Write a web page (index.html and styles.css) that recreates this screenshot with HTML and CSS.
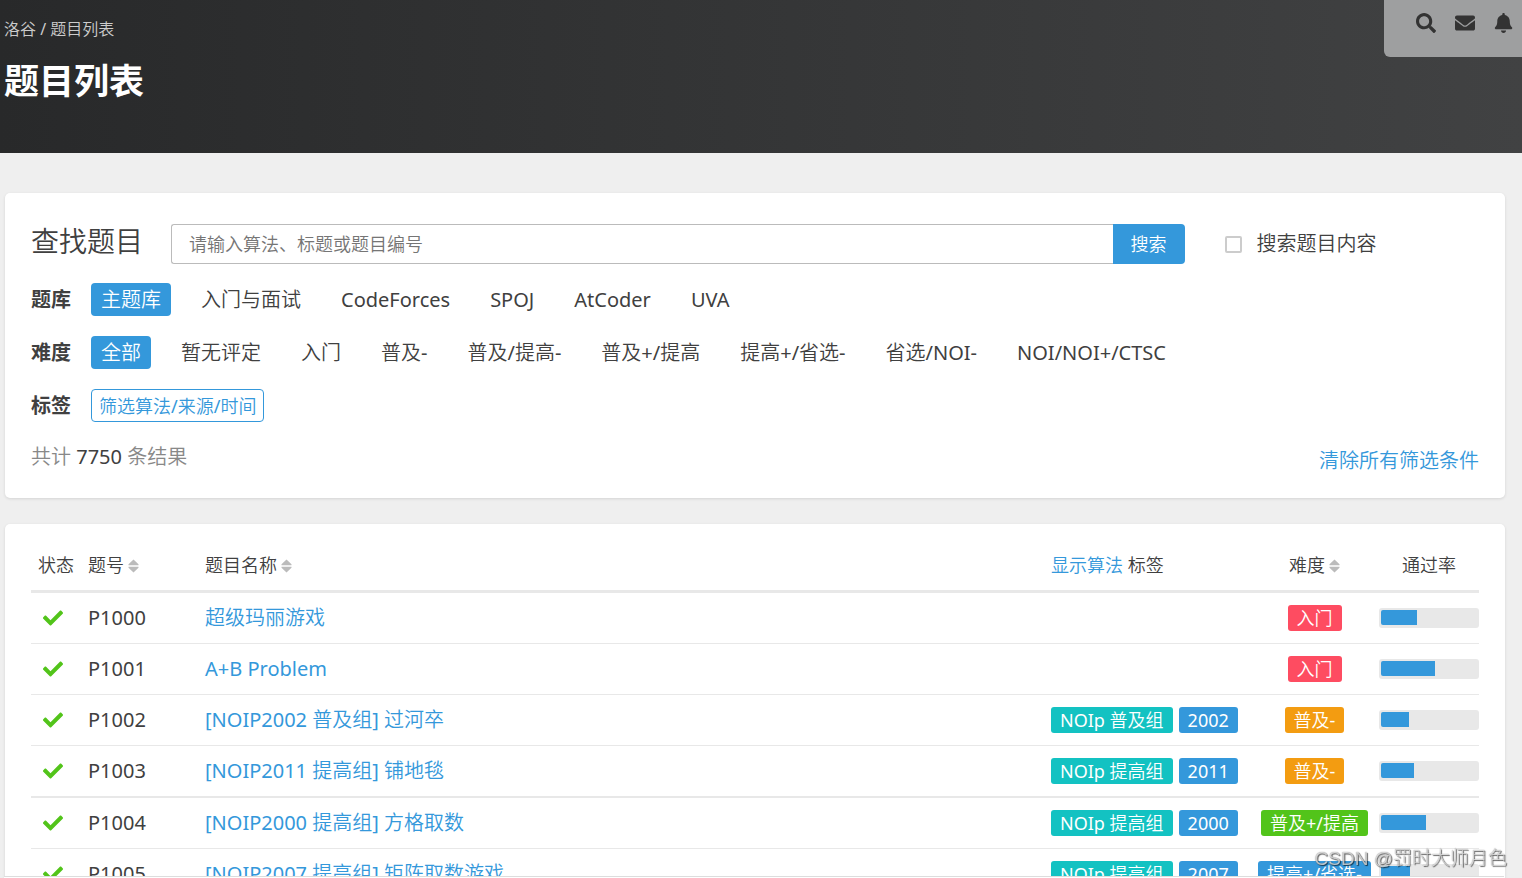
FILE: index.html
```html
<!DOCTYPE html>
<html lang="zh-CN">
<head>
<meta charset="utf-8">
<title>题目列表 - 洛谷</title>
<link rel="stylesheet" href="styles.css">
</head>
<body>
<svg class="defs" aria-hidden="true">
  <symbol id="check" viewBox="0 0 512 512"><path d="M173.898 439.404l-166.400-166.400c-9.997-9.997-9.997-26.206 0-36.204l36.203-36.204c9.997-9.998 26.207-9.998 36.204 0L192 312.690 432.095 72.596c9.997-9.997 26.207-9.997 36.204 0l36.203 36.204c9.997 9.997 9.997 26.206 0 36.204l-294.400 294.401c-9.998 9.997-26.207 9.997-36.204-.001z"/></symbol>
  <symbol id="sort" viewBox="0 0 11 14"><path d="M5.500 0.500L10.500 5.200V6.200H0.500V5.200zM0.500 7.800H10.500V8.800L5.500 13.500L0.500 8.800z"/></symbol>
</svg>
<header class="banner">
  <div class="heading">
    <nav class="crumbs"><a href="#">洛谷</a> / <span>题目列表</span></nav>
    <h1 class="title">题目列表</h1>
  </div>
  <nav class="tools">
    <a href="#" aria-label="搜索"><svg viewBox="0 0 512 512"><path d="M505 442.700L405.300 343c-4.500-4.500-10.600-7-17-7H372c27.600-35.300 44-79.700 44-128C416 93.100 322.900 0 208 0S0 93.100 0 208s93.100 208 208 208c48.300 0 92.700-16.400 128-44v16.300c0 6.400 2.500 12.500 7 17l99.700 99.700c9.400 9.400 24.600 9.400 33.900 0l28.300-28.300c9.400-9.400 9.400-24.600.1-34zM208 336c-70.700 0-128-57.200-128-128 0-70.700 57.200-128 128-128 70.700 0 128 57.200 128 128 0 70.700-57.200 128-128 128z"/></svg></a>
    <a href="#" aria-label="私信"><svg viewBox="0 0 512 512"><path d="M502.300 190.800c3.900-3.100 9.700-.2 9.700 4.700V400c0 26.500-21.500 48-48 48H48c-26.500 0-48-21.500-48-48V195.600c0-5 5.700-7.800 9.700-4.700 22.400 17.400 52.100 39.500 154.100 113.600 21.100 15.400 56.700 47.800 92.200 47.600 35.700.3 72-32.800 92.300-47.600 102-74.100 131.600-96.300 154-113.700zM256 320c23.200.4 56.600-29.200 73.400-41.400 132.700-96.300 142.800-104.700 173.400-128.700 5.800-4.500 9.200-11.500 9.200-18.900v-19c0-26.500-21.500-48-48-48H48c-26.500 0-48 21.500-48 48v19c0 7.400 3.400 14.300 9.200 18.900 30.600 23.900 40.700 32.400 173.400 128.700 16.800 12.200 50.200 41.800 73.400 41.400z"/></svg></a>
    <a href="#" aria-label="通知"><svg viewBox="-20 0 512 512"><path d="M224 512c35.320 0 63.970-28.650 63.970-64H160.030c0 35.350 28.650 64 63.970 64zm215.390-149.710c-19.320-20.760-55.470-51.990-55.470-154.290 0-77.700-54.480-139.900-127.940-155.160V32c0-17.670-14.320-32-31.980-32s-31.980 14.330-31.980 32v20.840C118.560 68.100 64.080 130.300 64.080 208c0 102.300-36.150 133.530-55.470 154.290-6 6.450-8.660 14.160-8.610 21.710.11 16.400 12.980 32 32.100 32h383.800c19.120 0 32-15.600 32.100-32 .05-7.550-2.610-15.270-8.610-21.710z"/></svg></a>
  </nav>
</header>
<main class="content">
  <section class="card filters">
    <form class="search">
      <label class="search-title" for="keyword">查找题目</label>
      <div class="search-box">
        <input class="keyword" id="keyword" type="text" placeholder="请输入算法、标题或题目编号">
        <button class="submit" type="button">搜索</button>
      </div>
      <label class="in-content"><input type="checkbox">搜索题目内容</label>
    </form>
    <div class="filter">
      <strong>题库</strong>
      <div class="options">
        <a class="active" href="#">主题库</a><a href="#">入门与面试</a><a href="#">CodeForces</a><a href="#">SPOJ</a><a href="#">AtCoder</a><a href="#">UVA</a>
      </div>
    </div>
    <div class="filter">
      <strong>难度</strong>
      <div class="options">
        <a class="active" href="#">全部</a><a href="#">暂无评定</a><a href="#">入门</a><a href="#">普及-</a><a href="#">普及/提高-</a><a href="#">普及+/提高</a><a href="#">提高+/省选-</a><a href="#">省选/NOI-</a><a href="#">NOI/NOI+/CTSC</a>
      </div>
    </div>
    <div class="filter">
      <strong>标签</strong>
      <button class="pick-tags" type="button">筛选算法/来源/时间</button>
    </div>
    <div class="summary">
      <p class="count">共计 <span>7750</span> 条结果</p>
      <a class="clear" href="#">清除所有筛选条件</a>
    </div>
  </section>
  <section class="card list">
    <table class="problems">
      <colgroup><col class="c-status"><col class="c-id"><col><col class="c-tags"><col class="c-level"><col class="c-rate"></colgroup>
      <thead>
        <tr>
          <th class="status">状态</th>
          <th>题号<svg class="sort"><use href="#sort"/></svg></th>
          <th>题目名称<svg class="sort"><use href="#sort"/></svg></th>
          <th><a href="#">显示算法</a> 标签</th>
          <th class="level">难度<svg class="sort"><use href="#sort"/></svg></th>
          <th class="rate">通过率</th>
        </tr>
      </thead>
      <tbody>
        <tr><td class="status"><svg class="check"><use href="#check"/></svg></td><td>P1000</td><td><a href="#">超级玛丽游戏</a></td><td></td><td><div class="tags center"><span class="tag red">入门</span></div></td><td><div class="bar"><div class="fill" style="width:37%"></div></div></td></tr>
        <tr><td class="status"><svg class="check"><use href="#check"/></svg></td><td>P1001</td><td><a href="#">A+B Problem</a></td><td></td><td><div class="tags center"><span class="tag red">入门</span></div></td><td><div class="bar"><div class="fill" style="width:56%"></div></div></td></tr>
        <tr><td class="status"><svg class="check"><use href="#check"/></svg></td><td>P1002</td><td><a href="#">[NOIP2002 普及组] 过河卒</a></td><td><div class="tags"><span class="tag teal">NOIp 普及组</span><span class="tag blue">2002</span></div></td><td><div class="tags center"><span class="tag orange">普及-</span></div></td><td><div class="bar"><div class="fill" style="width:29%"></div></div></td></tr>
        <tr class="group-end"><td class="status"><svg class="check"><use href="#check"/></svg></td><td>P1003</td><td><a href="#">[NOIP2011 提高组] 铺地毯</a></td><td><div class="tags"><span class="tag teal">NOIp 提高组</span><span class="tag blue">2011</span></div></td><td><div class="tags center"><span class="tag orange">普及-</span></div></td><td><div class="bar"><div class="fill" style="width:34%"></div></div></td></tr>
        <tr><td class="status"><svg class="check"><use href="#check"/></svg></td><td>P1004</td><td><a href="#">[NOIP2000 提高组] 方格取数</a></td><td><div class="tags"><span class="tag teal">NOIp 提高组</span><span class="tag blue">2000</span></div></td><td><div class="tags center"><span class="tag green">普及+/提高</span></div></td><td><div class="bar"><div class="fill" style="width:47%"></div></div></td></tr>
        <tr><td class="status"><svg class="check"><use href="#check"/></svg></td><td>P1005</td><td><a href="#">[NOIP2007 提高组] 矩阵取数游戏</a></td><td><div class="tags"><span class="tag teal">NOIp 提高组</span><span class="tag blue">2007</span></div></td><td><div class="tags center"><span class="tag blue">提高+/省选-</span></div></td><td><div class="bar"><div class="fill" style="width:30%"></div></div></td></tr>
      </tbody>
    </table>
  </section>
</main>
<div class="status-edge"></div>
<div class="watermark">CSDN @罚时大师月色</div>
</body>
</html>
```
FILE: styles.css
```css
* { box-sizing: border-box; }
html, body { height: 100%; }
body {
  margin: 0;
  overflow: hidden;
  background: #efefef;
  color: #404040;
  font: 400 20px/30px "Noto Sans", "Noto Sans CJK SC DemiLight", "Noto Sans CJK SC", sans-serif;
}
a { color: #3498db; text-decoration: none; }
input, button { font: inherit; }
.defs { display: none; }

.banner {
  display: flex;
  justify-content: space-between;
  align-items: flex-start;
  padding-bottom: 47px;
  background: linear-gradient(90deg, #28292a, #414243);
  color: #fff;
}
.heading { padding: 17px 4px 0; }
.crumbs { font-size: 16px; line-height: 24px; color: #ccc; }
.crumbs a { color: inherit; }
.title {
  margin: 15px 0 0;
  font: 700 35px/50px "Noto Sans", "Noto Sans CJK SC", sans-serif;
}
.tools {
  display: flex;
  gap: 19px;
  padding: 13px 8px 24px 32px;
  border-bottom-left-radius: 6px;
  background: #9e9fa0;
}
.tools a { display: flex; color: #333; }
.tools svg { width: 20px; height: 20px; fill: currentColor; }

.content {
  display: flex;
  flex-direction: column;
  gap: 26px;
  padding: 40px 17px 0 5px;
}
.card {
  padding: 31px 26px 22px;
  border-radius: 5px;
  background: #fff;
  box-shadow: 0 1px 3px rgba(26, 26, 26, 0.12);
}
.search { display: flex; align-items: center; margin-bottom: 19px; }
.search-title { width: 140px; padding-bottom: 5px; font-size: 28px; line-height: 35px; }
.search-box { display: flex; width: 70%; height: 40px; }
.keyword {
  flex: 1;
  min-width: 0;
  padding: 0 17px;
  border: 1px solid #bbb;
  border-right: 0;
  border-radius: 3px 0 0 3px;
  background: #fff;
  font-size: 18px;
}
.keyword::placeholder { color: #757575; }
.submit {
  padding: 0 18px;
  border: 0;
  border-radius: 0 4px 4px 0;
  background: #3498db;
  color: #fff;
  font-size: 18px;
}
.in-content { display: flex; align-items: center; gap: 15px; margin-left: 40px; }
.in-content input {
  appearance: none;
  width: 17px;
  height: 17px;
  margin: 0;
  border: 2px solid #ccc;
  border-radius: 2px;
  background: #fff;
}
.filter { display: flex; align-items: center; gap: 20px; margin-bottom: 20px; line-height: 33px; }
.filter strong { font-family: "Noto Sans", "Noto Sans CJK SC", sans-serif; font-weight: 700; }
.options { display: flex; gap: 20px; }
.options a { padding: 0 10px; border-radius: 4px; color: #404040; }
.options .active { background: #3498db; color: #fff; }
.pick-tags {
  height: 33px;
  padding: 0 7px;
  border: 1px solid #3498db;
  border-radius: 4px;
  background: #fff;
  color: #3498db;
  font-size: 18px;
  line-height: 30px;
}
.summary { display: flex; justify-content: space-between; }
.count { margin: 0; color: #888; }
.count span { color: #404040; }
.clear { padding-top: 4px; }

.list { padding-top: 23px; }
.problems { width: 100%; table-layout: fixed; border-collapse: separate; border-spacing: 0; }
.c-status { width: 57px; }
.c-id { width: 117px; }
.c-tags { width: 199px; }
.c-level { width: 129px; }
.c-rate { width: 100px; }
th { height: 46px; padding: 0 0 8px; border-bottom: 3px solid #e8e8e8; font-size: 18px; font-weight: 400; text-align: left; white-space: nowrap; }
td { height: 51px; padding: 0; border-bottom: 1px solid #e8e8e8; white-space: nowrap; }
.group-end td { height: 52px; border-bottom-width: 2px; }
th.status { padding-left: 7px; }
td.status { padding-left: 12px; }
th.level, th.rate { text-align: center; }
.sort { width: 11px; height: 14px; margin-left: 4px; vertical-align: -1px; fill: #bbb; }
.check { display: block; width: 20px; height: 20px; fill: #52c41a; }
.tags { display: flex; gap: 6px; }
.center { justify-content: center; }
.tag {
  padding: 0 9px;
  border-radius: 3px;
  color: #fff;
  font-size: 18px;
  line-height: 26px;
}
.red { background: #fe4c61; }
.orange { background: #f39c11; }
.green { background: #52c41a; }
.teal { background: #13c2c2; }
.blue { background: #3498db; }
.bar { height: 20px; padding: 2px; border-radius: 3px; background: #e8e8e8; }
.fill { height: 15px; border-radius: 2px 0 0 2px; background: #3498db; }

.status-edge {
  position: fixed;
  left: 4px;
  right: 18px;
  bottom: 0;
  height: 2px;
  border-top: 1px solid #ddd;
  background: #fff;
}
.watermark {
  position: fixed;
  right: 15px;
  bottom: 4px;
  color: rgba(255, 255, 255, 0.7);
  font: 300 19px/30px "Liberation Sans", "Noto Sans CJK SC", sans-serif;
  text-shadow: 1px 1px 1px rgba(0, 0, 0, 0.6), 0 0 1px rgba(0, 0, 0, 0.6);
}
```
